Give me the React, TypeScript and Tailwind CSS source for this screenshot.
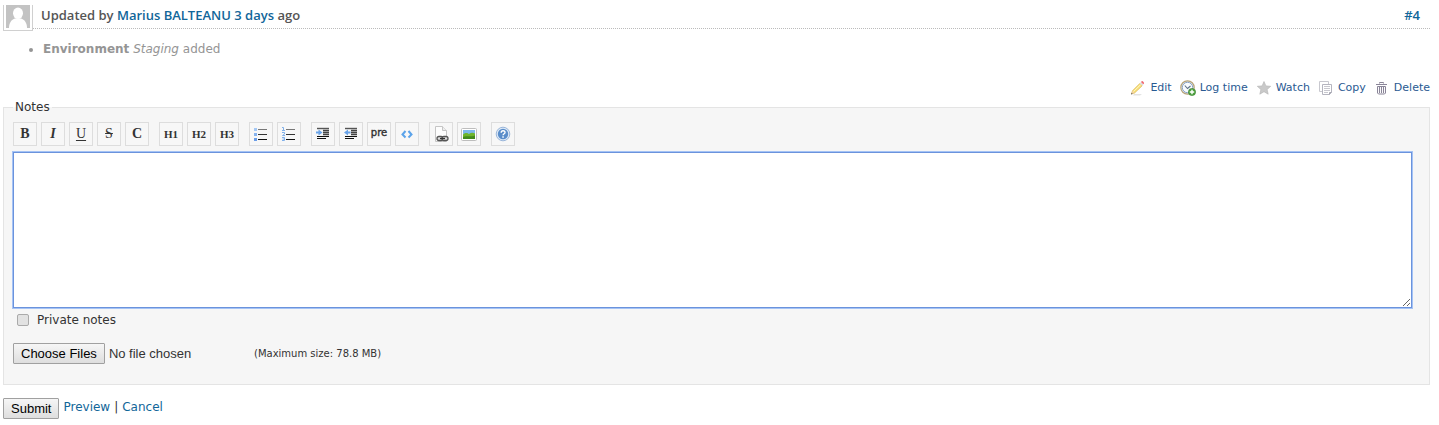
import React from 'react'

type IconProps = { children: React.ReactNode }

const Icon = ({ children }: IconProps) => (
  <svg width="16" height="16" viewBox="0 0 16 16" className="shrink-0" aria-hidden="true">
    {children}
  </svg>
)

/* Contextual icons */

const PencilIcon = () => (
  <Icon>
    <path d="M4 14h8l-2 1.500H3z" fill="#e3e3e3" />
    <path d="M1.500 13.800l1-3L9.800 3.500l2.300 2.300-7.600 7.200z" fill="#f9e27a" stroke="#d8b04a" strokeWidth=".7" />
    <path d="M3.500 11.500L10.700 4.600" stroke="#fff6c4" strokeWidth="1" />
    <path d="M9.800 3.200l1-1 2.500 2.500-1 1z" fill="#d8dbe0" />
    <path d="M10.900 2.100l.9-.9c.7-.5 2.700 1.500 2.200 2.200l-.8.9z" fill="#f0686e" />
    <path d="M1.300 14l1.100-3 2.100 2z" fill="#f0cfa2" />
    <path d="M1 14.500l.6-1.700 1.100 1.100z" fill="#555" />
  </Icon>
)

const ClockIcon = () => (
  <Icon>
    <circle cx="7.500" cy="7.500" r="6.700" fill="#dfe8f2" stroke="#b8a478" strokeWidth="1.200" />
    <circle cx="7.500" cy="7.500" r="5.200" fill="#f8fbfe" stroke="#8aa3c4" strokeWidth="1" />
    <path d="M4.800 5.500L7.500 8.500l3-2.500" fill="none" stroke="#5c7088" strokeWidth="1.100" />
    <circle cx="12" cy="12" r="3.600" fill="#4ea23f" stroke="#35812c" strokeWidth=".6" />
    <path d="M12 9.800v4.400M9.800 12h4.400" stroke="#fff" strokeWidth="1.400" />
  </Icon>
)

const StarIcon = () => (
  <Icon>
    <path
      d="M8 1.500l1.900 4.400 4.800.4-3.600 3.200 1.100 4.700L8 11.700l-4.200 2.500 1.100-4.700L1.300 6.300l4.800-.4z"
      fill="#c9c9c9"
      stroke="#b2b2b2"
      strokeWidth=".6"
    />
  </Icon>
)

const CopyIcon = () => (
  <Icon>
    <path d="M1.500 1.500h9v10h-9z" fill="#fff" stroke="#c8c8cf" />
    <path d="M4.500 4.500h9v8l-2 2h-7z" fill="#fff" stroke="#b5b5bf" />
    <path d="M6 6.500h6M6 8.500h6M6 10.500h6M6 12.500h4" stroke="#c8c8cf" />
    <path d="M11.500 14.500v-2h2" fill="none" stroke="#a5a5b0" />
  </Icon>
)

const TrashIcon = () => (
  <Icon>
    <path d="M5.500 3.500v-1h4v1" fill="none" stroke="#8a8598" />
    <path d="M2 4.500h11" stroke="#8a8598" />
    <path d="M3.500 6.500h8v6.500l-1 1h-6l-1-1z" fill="#fbfbfc" stroke="#8a8598" />
    <path d="M5.500 7v6M7.500 7v6M9.500 7v6" stroke="#8a8598" />
  </Icon>
)

/* Toolbar icons */

const ListLines = () => (
  <>
    <path d="M5 3.500h9" stroke="#777" />
    <path d="M5 8.500h9" stroke="#333" />
    <path d="M5 13.500h9" stroke="#111" />
  </>
)

const BulletListIcon = () => (
  <Icon>
    <path d="M1 2h3v3H1z" fill="#a4c8f5" />
    <path d="M1 7h3v3H1z" fill="#86b3ef" />
    <path d="M1 12h3v3H1z" fill="#6a9de8" />
    <ListLines />
  </Icon>
)

const NumberListIcon = () => (
  <Icon>
    <path
      d="M1 1.500h1.500v3M1 4.500h3M1 6.500h2.500v1.500L1.500 9.500H4M1 11.500h2.500v3H1M1.500 13h2"
      fill="none"
      stroke="#80b0ea"
    />
    <ListLines />
  </Icon>
)

const IndentLines = () => (
  <>
    <path d="M2 2.500h12" stroke="#555" strokeWidth="1.400" />
    <path d="M8 4.500h6M8 6.500h6M8 8.500h6" stroke="#444" strokeWidth="1.400" />
    <path d="M2 10.500h12M2 12.500h9" stroke="#111" />
  </>
)

const QuoteIcon = () => (
  <Icon>
    <IndentLines />
    <path d="M1 5.500h2.500V3.500L7.500 6.500l-4 3v-2H1z" fill="#69a3e8" />
  </Icon>
)

const UnquoteIcon = () => (
  <Icon>
    <IndentLines />
    <path d="M7.500 5.500H5V3.500L1 6.500l4 3v-2h2.500z" fill="#69a3e8" />
  </Icon>
)

const CodeIcon = () => (
  <Icon>
    <path d="M6.500 5L3.500 8.500l3 3M9.500 5l3 3.500-3 3" fill="none" stroke="#5ba3ea" strokeWidth="2" />
  </Icon>
)

const LinkIcon = () => (
  <Icon>
    <path d="M2.500.500h7l4 4v11h-11z" fill="#fdfdfd" stroke="#c5c5c5" />
    <path d="M9.500.500v4h4" fill="#eee" stroke="#c5c5c5" />
    <rect x="4" y="10.500" width="6" height="4" rx="2" fill="#ddd" stroke="#555" strokeWidth="1.300" />
    <rect x="9" y="10.500" width="6" height="4" rx="2" fill="#ddd" stroke="#555" strokeWidth="1.300" />
    <path d="M7 12.500h5" stroke="#333" strokeWidth="1.300" />
  </Icon>
)

const ImageIcon = () => (
  <Icon>
    <rect x=".5" y="2.500" width="15" height="12" rx="1" fill="#fff" stroke="#bdbdbd" />
    <path d="M2 4h12v9H2z" fill="#7db7ea" />
    <path d="M2 8.500c3-2.500 4.500-1.500 6-.5 2-1.500 4-1.500 6-.5V13H2z" fill="#6fb52c" />
    <path d="M2 11c4-1.500 8 0 12-1.500V13H2z" fill="#438a1d" />
  </Icon>
)

const HelpIcon = () => (
  <Icon>
    <circle cx="8" cy="8" r="6.800" fill="#dce8f6" stroke="#9ab6da" />
    <circle cx="8" cy="8" r="5.200" fill="#5a8dca" />
    <path d="M6.200 6.700c0-2.600 3.800-2.500 3.800-.3 0 1.400-1.900 1.400-1.900 2.900" fill="none" stroke="#fff" strokeWidth="1.400" />
    <path d="M7.300 10.300h1.500v1.500H7.300z" fill="#fff" />
  </Icon>
)

const actions = [
  { label: 'Edit', icon: <PencilIcon /> },
  { label: 'Log time', icon: <ClockIcon /> },
  { label: 'Watch', icon: <StarIcon /> },
  { label: 'Copy', icon: <CopyIcon /> },
  { label: 'Delete', icon: <TrashIcon /> },
]

const toolbar = [
  [
    { title: 'Strong', content: <b>B</b> },
    { title: 'Italic', content: <b className="italic">I</b> },
    { title: 'Underline', content: <span className="underline underline-offset-2">U</span> },
    { title: 'Deleted', content: <span className="line-through">S</span> },
    { title: 'Inline code', content: <b>C</b> },
  ],
  [
    { title: 'Heading 1', content: <b className="text-[11px]">H1</b> },
    { title: 'Heading 2', content: <b className="text-[11px]">H2</b> },
    { title: 'Heading 3', content: <b className="text-[11px]">H3</b> },
  ],
  [
    { title: 'Unordered list', content: <BulletListIcon /> },
    { title: 'Ordered list', content: <NumberListIcon /> },
  ],
  [
    { title: 'Quote', content: <QuoteIcon /> },
    { title: 'Remove quote', content: <UnquoteIcon /> },
    {
      title: 'Preformatted text',
      content: <span className="pb-[2px] font-['DejaVu_Sans',sans-serif] text-[10px] [-webkit-text-stroke:0.4px]">pre</span>,
    },
    { title: 'Code', content: <CodeIcon /> },
  ],
  [
    { title: 'Link', content: <LinkIcon /> },
    { title: 'Image', content: <ImageIcon /> },
  ],
  [{ title: 'Help', content: <HelpIcon /> }],
]

const JournalEntry = () => (
  <div>
    <div className="flex items-start">
      <div className="h-[26px] w-[30px] shrink-0 border border-t-0 border-[#d0d0d0] px-[2px]">
        <svg viewBox="0 0 24 22" className="block h-[23px] w-full" preserveAspectRatio="none" aria-hidden="true">
          <path d="M0 0h24v22H0z" fill="#c3c3c3" />
          <ellipse cx="12" cy="8" rx="5" ry="5.500" fill="#fff" />
          <path d="M3 22c0-5 2.500-8 6-9h6c3.500 1 6 4 6 9z" fill="#fff" />
        </svg>
      </div>
      <h4 className="flex h-6 flex-1 justify-between border-b border-dotted border-[#bbb] pr-[10px] pl-2 font-['Open_Sans',sans-serif] text-[13px] leading-5 font-semibold text-[#555]">
        <span>
          Updated by <a href="#user" className="text-[#169]">Marius BALTEANU</a>{' '}
          <a href="#activity" className="text-[#169]">3 days</a> ago
        </span>
        <a href="#note-4" className="text-[#169]">#4</a>
      </h4>
    </div>
    <ul className="mt-[10px] list-disc pl-10 leading-4 text-[#959595]">
      <li><strong>Environment</strong> <i>Staging</i> added</li>
    </ul>
  </div>
)

const Contextual = () => (
  <div className="mt-[23px] flex justify-end gap-2 text-[11px] leading-4">
    {actions.map(({ label, icon }) => (
      <a key={label} href="#action" className="flex gap-1 text-[#2a5a92]">
        {icon}
        {label}
      </a>
    ))}
  </div>
)

const Toolbar = () => (
  <div className="flex gap-[10px]">
    {toolbar.map((group, index) => (
      <div key={index} className="flex gap-1">
        {group.map(({ title, content }) => (
          <button
            key={title}
            type="button"
            title={title}
            className="flex size-6 items-center justify-center border border-[#ddd] bg-[#f7f7f7] font-['Liberation_Serif',serif] text-[14px] leading-4 text-[#333]"
          >
            {content}
          </button>
        ))}
      </div>
    ))}
  </div>
)

export default function App() {
  return (
    <form
      onSubmit={(e) => e.preventDefault()}
      className="pt-[5px] pr-[9px] pl-[3px] font-['DejaVu_Sans',Verdana,sans-serif] text-[12px] text-[#333]"
    >
      <JournalEntry />
      <Contextual />

      <fieldset className="mt-[3px] border border-[#e4e4e4] bg-[#f6f6f6] px-[9px] pt-[7px] pb-5">
        <legend className="px-[2px] leading-4">Notes</legend>
        <Toolbar />
        <textarea
          aria-label="Notes"
          className="mt-[6px] block h-[156px] w-[calc(100%-8px)] resize-y border border-[#6b93dc] bg-white outline outline-[#a5c3f5]"
        />
        <label className="mt-1 flex items-center gap-2 pl-1 leading-4">
          <input type="checkbox" className="size-3 appearance-none rounded-xs border border-[#aaa] bg-[#e2e2e2]" />
          Private notes
        </label>
        <div className="mt-[15px] flex items-center">
          <input
            type="file"
            multiple
            aria-label="Files"
            className="w-[241px] font-['Liberation_Sans',sans-serif] text-[13px] leading-4 file:mr-1 file:h-[21px] file:rounded-[1px] file:border file:border-solid file:border-[#a0a0a0] file:bg-linear-to-b file:from-[#f6f6f6] file:to-[#dedede] file:px-[7px] file:text-black"
          />
          <span className="text-[10px]">(Maximum size: 78.8 MB)</span>
        </div>
      </fieldset>

      <div className="mt-[13px] flex items-start gap-1 leading-[18px]">
        <button
          type="submit"
          className="h-[21px] rounded-[1px] border border-[#a0a0a0] bg-linear-to-b from-[#f6f6f6] to-[#dedede] px-[7px] font-['Liberation_Sans',sans-serif] text-[13px] leading-4 text-black"
        >
          Submit
        </button>
        <a href="#preview" className="text-[#169]">Preview</a>
        <span>|</span>
        <a href="#cancel" className="text-[#169]">Cancel</a>
      </div>
    </form>
  )
}
